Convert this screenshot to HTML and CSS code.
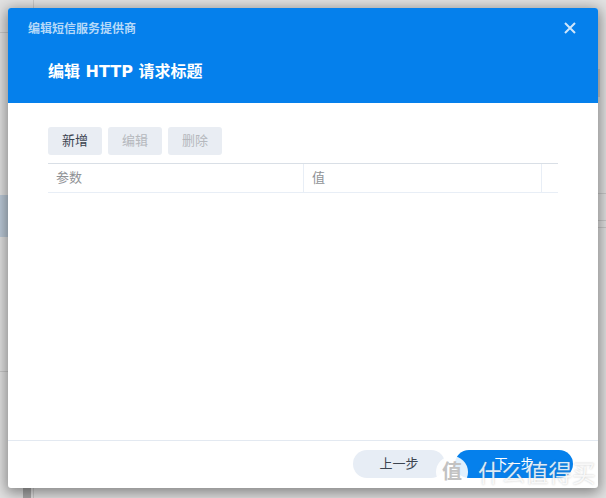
FILE: index.html
```html
<!DOCTYPE html>
<html lang="zh">
<head>
<meta charset="utf-8">
<title>编辑 HTTP 请求标题</title>
<link rel="stylesheet" href="styles.css">
</head>
<body>
<div class="backdrop">
  <i class="bg-line bg-v1"></i>
  <i class="bg-line bg-v2"></i>
  <i class="bg-line bg-h1"></i>
  <i class="bg-line bg-h2"></i>
  <i class="bg-line bg-h3"></i>
  <i class="bg-line bg-h4"></i>
  <i class="bg-line bg-h5"></i>
  <i class="bg-sel"></i>
  <i class="bg-sel-r"></i>
</div>
<section class="dialog">
  <header class="head">
    <div class="head-top">
      <span class="app-title">编辑短信服务提供商</span>
      <svg class="close" width="12" height="12" viewBox="0 0 12 12"><path d="M1 1L11 11M11 1L1 11" stroke="#cfe6fb" stroke-width="2" fill="none"/></svg>
    </div>
    <h1 class="title">编辑 HTTP 请求标题</h1>
  </header>
  <div class="body">
    <div class="toolbar">
      <button class="btn btn-on">新增</button>
      <button class="btn">编辑</button>
      <button class="btn">删除</button>
    </div>
    <div class="table">
      <div class="cell cell-a">参数</div>
      <div class="cell cell-b">值</div>
      <div class="cell cell-c"></div>
    </div>
  </div>
  <footer class="foot">
    <button class="pill pill-back">上一步</button>
    <button class="pill pill-next">下一步</button>
  </footer>
</section>
<div class="watermark">
  <span class="wm-badge">值</span>
  <span class="wm-text">什么值得买</span>
</div>
</body>
</html>
```

FILE: styles.css
```css
* { box-sizing: border-box; }
html, body { margin: 0; height: 100%; }
body {
  width: 606px;
  height: 498px;
  padding: 8px;
  overflow: hidden;
  position: relative;
  background: #e2e2e2;
  font-family: "Noto Sans CJK SC", "Liberation Sans", sans-serif;
}
.backdrop { position: absolute; inset: 0; }
.bg-line { position: absolute; background: #c9c9c9; }
.bg-v1 { left: 33px; top: 0; width: 1px; height: 498px; }
.bg-v2 { left: 23px; top: 488px; width: 8px; height: 10px; background: #a8a8a8; }
.bg-h1 { left: 0; top: 32px; width: 8px; height: 1px; }
.bg-h2 { left: 0; top: 371px; width: 8px; height: 1px; }
.bg-h3 { left: 598px; top: 193px; width: 8px; height: 1px; }
.bg-h4 { left: 598px; top: 220px; width: 8px; height: 1px; }
.bg-h5 { left: 598px; top: 227px; width: 8px; height: 1px; }
.bg-sel { position: absolute; left: 0; top: 195px; width: 8px; height: 42px; background: #bccad8; }
.bg-sel-r { position: absolute; left: 598px; top: 69px; width: 2px; height: 28px; background: #cccccc; }
.dialog {
  position: relative;
  width: 590px;
  height: 480px;
  display: flex;
  flex-direction: column;
  background: #fff;
  border-radius: 3px;
  overflow: hidden;
  box-shadow: 0 3px 14px 2px rgba(0, 0, 0, .42);
}
.head {
  height: 95px;
  background: #0580ec;
  padding: 11px 20px 0 20px;
  flex: none;
}
.head-top {
  display: flex;
  justify-content: space-between;
  align-items: center;
  height: 18px;
}
.app-title { font-size: 12px; font-weight: 700; color: #b5d9f9; line-height: 16px; }
.close { margin-right: 2px; }
.title {
  margin: 23px 0 0 20px;
  font-family: "DejaVu Sans", "Noto Sans CJK SC", sans-serif;
  font-size: 16px;
  line-height: 24px;
  font-weight: 700;
  color: #fff;
}
.body { flex: 1; padding: 24px 40px 0; }
.toolbar { display: flex; gap: 6px; }
.btn {
  width: 54px;
  height: 28px;
  padding: 0 0 2px;
  border: 0;
  border-radius: 3px;
  background: #e9edf3;
  color: #b5b8bd;
  font: 13px/26px "Noto Sans CJK SC", sans-serif;
}
.btn-on { color: #3c4450; }
.table {
  display: flex;
  width: 510px;
  height: 30px;
  margin-top: 8px;
  border-top: 1px solid #d9dfe6;
  border-bottom: 1px solid #e8eef6;
}
.cell {
  font-size: 13px;
  line-height: 26px;
  color: #8f9296;
  padding-left: 8px;
  border-right: 1px solid #e8eef6;
}
.cell-a { width: 256px; }
.cell-b { width: 238px; }
.cell-c { flex: 1; border-right: 0; }
.foot {
  flex: none;
  height: 48px;
  border-top: 1px solid #e3e9f1;
  padding: 9px 25px 0 0;
  display: flex;
  justify-content: flex-end;
  gap: 10px;
}
.pill {
  height: 28px;
  padding: 0 0 2px;
  border: 0;
  border-radius: 14px;
  font: 13px/26px "Noto Sans CJK SC", sans-serif;
}
.pill-back { width: 92px; background: #e7edf5; color: #3c4450; }
.pill-next { width: 118px; background: #0580ec; color: #fff; }
.watermark {
  position: absolute;
  left: 436px;
  top: 456px;
  display: flex;
  align-items: center;
  gap: 10px;
  height: 32px;
}
.wm-badge {
  width: 32px;
  height: 32px;
  border-radius: 50%;
  background: rgba(255, 255, 255, .88);
  color: #c2c2c2;
  font-size: 20px;
  line-height: 30px;
  text-align: center;
  font-weight: 700;
}
.wm-text {
  font-size: 23.5px;
  line-height: 32px;
  color: rgba(255, 255, 255, .85);
  font-weight: 400;
  white-space: nowrap;
  text-shadow: 0 0 2px rgba(120, 120, 120, .45);
}
```
